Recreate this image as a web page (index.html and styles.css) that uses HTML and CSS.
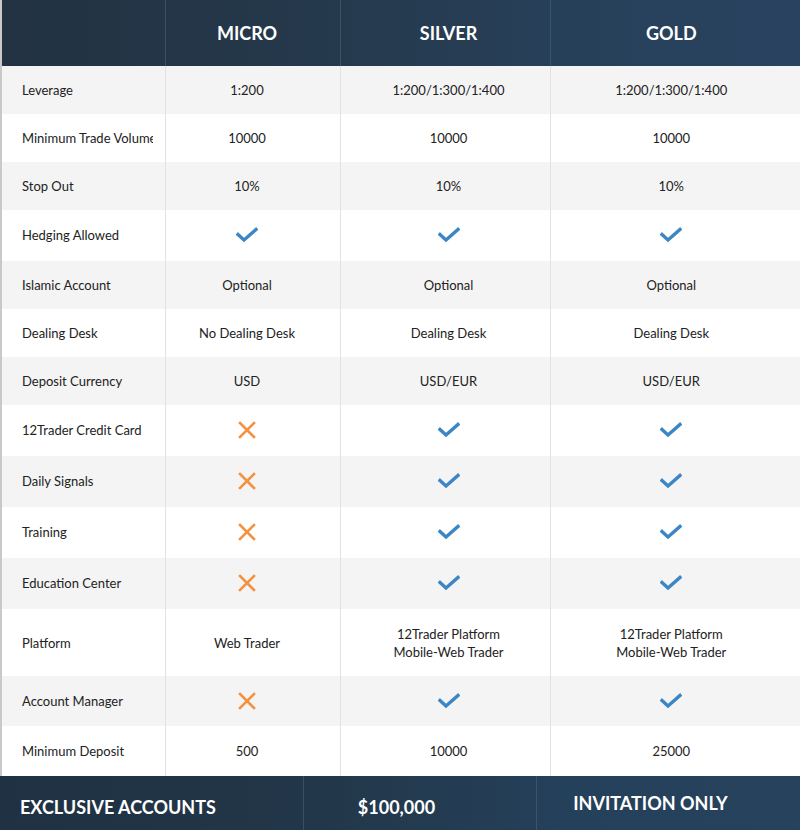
FILE: index.html
```html
<!DOCTYPE html>
<html>
<head>
<meta charset="utf-8">
<link rel="stylesheet" href="styles.css">
</head>
<body>
<div class="page">
  <table class="cmp">
    <colgroup>
      <col class="c-label"><col class="c-micro"><col class="c-silver"><col class="c-gold">
    </colgroup>
    <thead>
      <tr class="head">
        <th></th><th class="m">MICRO</th><th class="s">SILVER</th><th class="g">GOLD</th>
      </tr>
    </thead>
    <tbody>
      <tr class="alt h48"><td class="lbl">Leverage</td><td class="m">1:200</td><td class="s">1:200/1:300/1:400</td><td class="g">1:200/1:300/1:400</td></tr>
      <tr class="h48"><td class="lbl"><div class="clip">Minimum Trade Volume</div></td><td class="m">10000</td><td class="s">10000</td><td class="g">10000</td></tr>
      <tr class="alt h48"><td class="lbl">Stop Out</td><td class="m">10%</td><td class="s">10%</td><td class="g">10%</td></tr>
      <tr class="h51"><td class="lbl">Hedging Allowed</td><td class="m"><svg class="ico" viewBox="0 0 22 16"><path class="chk" d="M2 7.5 L8 13 L20 2.5"/></svg></td><td class="s"><svg class="ico" viewBox="0 0 22 16"><path class="chk" d="M2 7.5 L8 13 L20 2.5"/></svg></td><td class="g"><svg class="ico" viewBox="0 0 22 16"><path class="chk" d="M2 7.5 L8 13 L20 2.5"/></svg></td></tr>
      <tr class="alt h48"><td class="lbl">Islamic Account</td><td class="m">Optional</td><td class="s">Optional</td><td class="g">Optional</td></tr>
      <tr class="h48"><td class="lbl">Dealing Desk</td><td class="m">No Dealing Desk</td><td class="s">Dealing Desk</td><td class="g">Dealing Desk</td></tr>
      <tr class="alt h48"><td class="lbl">Deposit Currency</td><td class="m">USD</td><td class="s">USD/EUR</td><td class="g">USD/EUR</td></tr>
      <tr class="h51"><td class="lbl">12Trader Credit Card</td><td class="m"><svg class="ico x" viewBox="0 0 18 18"><path class="crs" d="M2 2 L16 16 M16 2 L2 16"/></svg></td><td class="s"><svg class="ico" viewBox="0 0 22 16"><path class="chk" d="M2 7.5 L8 13 L20 2.5"/></svg></td><td class="g"><svg class="ico" viewBox="0 0 22 16"><path class="chk" d="M2 7.5 L8 13 L20 2.5"/></svg></td></tr>
      <tr class="alt h51"><td class="lbl">Daily Signals</td><td class="m"><svg class="ico x" viewBox="0 0 18 18"><path class="crs" d="M2 2 L16 16 M16 2 L2 16"/></svg></td><td class="s"><svg class="ico" viewBox="0 0 22 16"><path class="chk" d="M2 7.5 L8 13 L20 2.5"/></svg></td><td class="g"><svg class="ico" viewBox="0 0 22 16"><path class="chk" d="M2 7.5 L8 13 L20 2.5"/></svg></td></tr>
      <tr class="h51"><td class="lbl">Training</td><td class="m"><svg class="ico x" viewBox="0 0 18 18"><path class="crs" d="M2 2 L16 16 M16 2 L2 16"/></svg></td><td class="s"><svg class="ico" viewBox="0 0 22 16"><path class="chk" d="M2 7.5 L8 13 L20 2.5"/></svg></td><td class="g"><svg class="ico" viewBox="0 0 22 16"><path class="chk" d="M2 7.5 L8 13 L20 2.5"/></svg></td></tr>
      <tr class="alt h51"><td class="lbl">Education Center</td><td class="m"><svg class="ico x" viewBox="0 0 18 18"><path class="crs" d="M2 2 L16 16 M16 2 L2 16"/></svg></td><td class="s"><svg class="ico" viewBox="0 0 22 16"><path class="chk" d="M2 7.5 L8 13 L20 2.5"/></svg></td><td class="g"><svg class="ico" viewBox="0 0 22 16"><path class="chk" d="M2 7.5 L8 13 L20 2.5"/></svg></td></tr>
      <tr class="h67"><td class="lbl">Platform</td><td class="m">Web Trader</td><td class="s">12Trader Platform<br>Mobile-Web Trader</td><td class="g">12Trader Platform<br>Mobile-Web Trader</td></tr>
      <tr class="alt h50"><td class="lbl">Account Manager</td><td class="m"><svg class="ico x" viewBox="0 0 18 18"><path class="crs" d="M2 2 L16 16 M16 2 L2 16"/></svg></td><td class="s"><svg class="ico" viewBox="0 0 22 16"><path class="chk" d="M2 7.5 L8 13 L20 2.5"/></svg></td><td class="g"><svg class="ico" viewBox="0 0 22 16"><path class="chk" d="M2 7.5 L8 13 L20 2.5"/></svg></td></tr>
      <tr class="h50"><td class="lbl">Minimum Deposit</td><td class="m">500</td><td class="s">10000</td><td class="g">25000</td></tr>
    </tbody>
  </table>
  <div class="footer">
    <div class="f-cell f-left">EXCLUSIVE ACCOUNTS</div>
    <div class="f-cell f-mid">$100,000</div>
    <div class="f-cell f-right">INVITATION ONLY</div>
  </div>
</div>
</body>
</html>
```
FILE: styles.css
```css
* { box-sizing: border-box; }
html, body { margin: 0; padding: 0; background: #fff; }
body { font-family: Lato, "Open Sans", sans-serif; color: #222; }
.page { width: 800px; height: 830px; overflow: hidden; }

.cmp {
  width: 800px;
  border-collapse: collapse;
  table-layout: fixed;
  border-left: 2px solid #c9c9c9;
}
.c-label { width: 164px; }
.c-micro { width: 175px; }
.c-silver { width: 210px; }
.c-gold { width: 250px; }

.head {
  height: 66px;
  background: linear-gradient(to right, #223242 0%, #25394c 40%, #274059 70%, #284260 100%);
  box-shadow: 0 2px 3px rgba(0,0,0,0.25);
}
.head th {
  color: #fff;
  font-size: 18px;
  font-weight: 700;
  text-align: center;
  padding-top: 0;
  padding-bottom: 0;
  border-left: 1px solid #3d5266;
}
.head th:first-child { border-left: none; }

.cmp td {
  font-size: 13px;
  text-align: center;
  vertical-align: middle;
  padding-top: 0;
  padding-bottom: 0;
  border-left: 1px solid #e2e2e2;
  line-height: 18px;
}
.cmp .m { padding-left: 0; padding-right: 11px; }
.cmp .s { padding-left: 7px; padding-right: 0; }
.cmp .g { padding-left: 0; padding-right: 8px; }
.cmp td.lbl {
  text-align: left;
  padding-left: 20px;
  padding-right: 0;
  border-left: none;
  white-space: nowrap;
  overflow: hidden;
}
.clip { width: 131px; overflow: hidden; white-space: nowrap; }
.alt { background: #f4f4f4; }
.h48 { height: 48px; }
.h50 { height: 50px; }
.h51 { height: 51px; }
.h51 td { padding-bottom: 1px; }
.h67 { height: 67px; }

.ico { width: 22px; height: 16px; display: block; margin: 0 auto; }
.ico.x { width: 18px; height: 18px; }
.chk { fill: none; stroke: #3d86c6; stroke-width: 3.4; stroke-linecap: square; stroke-linejoin: miter; }
.crs { fill: none; stroke: #f39240; stroke-width: 2.6; stroke-linecap: square; }

.footer {
  display: grid;
  grid-template-columns: 303px 233px 264px;
  height: 54px;
  background: linear-gradient(to right, #1f3143 0%, #223749 40%, #25405a 70%, #27425d 100%);
}
.f-cell {
  color: #fff;
  font-weight: 700;
  font-size: 18px;
  display: flex;
  align-items: center;
  padding-top: 7px;
}
.f-left { padding-left: 20px; }
.f-mid { justify-content: center; border-left: 1px solid #3a4e62; padding-right: 47px; }
.f-right { justify-content: center; border-left: 1px solid #3a5470; padding-top: 0; padding-bottom: 0; padding-right: 36px; }
```
